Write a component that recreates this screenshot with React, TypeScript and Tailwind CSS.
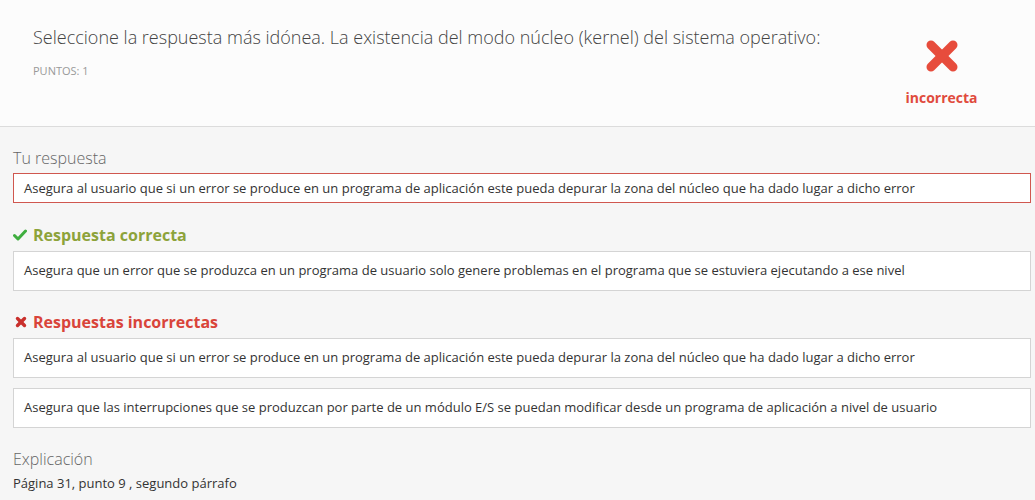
import React from 'react';

const font = { fontFamily: '"Open Sans", "Noto Sans", sans-serif' };

const BigCross: React.FC = () => (
  <svg width="34" height="34" viewBox="0 0 34 34">
    <g stroke="#e74c3c" strokeWidth="9" strokeLinecap="round">
      <line x1="6" y1="6" x2="28" y2="28" />
      <line x1="28" y1="6" x2="6" y2="28" />
    </g>
  </svg>
);

const SmallCheck: React.FC = () => (
  <svg width="14" height="12" viewBox="0 0 14 12">
    <path d="M1.5 6.5 L5 10 L12.5 2" fill="none" stroke="#3fae3f" strokeWidth="3" strokeLinecap="round" strokeLinejoin="round" />
  </svg>
);

const SmallCross: React.FC = () => (
  <svg width="12" height="12" viewBox="0 0 12 12">
    <g stroke="#c9302c" strokeWidth="3.4" strokeLinecap="round">
      <line x1="2.5" y1="2.5" x2="9.5" y2="9.5" />
      <line x1="9.5" y1="2.5" x2="2.5" y2="9.5" />
    </g>
  </svg>
);

const AnswerBox: React.FC<{ text: string; wrong?: boolean }> = ({ text, wrong }) => (
  <div
    className={`bg-white border ${wrong ? 'border-[#d0574f] h-[30px] pt-[2px]' : 'border-[#d4d4d4] h-[40px]'} flex items-center px-[10px] text-[13px] text-[#333]`}
  >
    {text}
  </div>
);

const App: React.FC = () => {
  return (
    <div className="w-[1035px] h-[500px] bg-[#f6f6f6] overflow-hidden" style={font}>
      {/* Header */}
      <div className="h-[127px] bg-[#fcfcfc] border-b border-[#dcdcdc] flex">
        <div className="flex-1 pl-[33px] pt-[24px]">
          <h1 className="text-[18px] font-light text-[#444] leading-[26px]">
            Seleccione la respuesta más idónea. La existencia del modo núcleo (kernel) del sistema operativo:
          </h1>
          <p className="text-[11px] text-[#999] mt-[13px] uppercase">Puntos: 1</p>
        </div>
        <div className="w-[145px] flex flex-col items-center pt-[39px] pr-[42px]">
          <BigCross />
          <span className="text-[14px] font-bold text-[#e04b3d] mt-[14px]">incorrecta</span>
        </div>
      </div>

      {/* Body */}
      <div className="pl-[13px] pr-[4px] pt-[20px]">
        <h2 className="text-[16px] font-light text-[#666] leading-[22px]">Tu respuesta</h2>
        <div className="mt-[4px]">
          <AnswerBox wrong text="Asegura al usuario que si un error se produce en un programa de aplicación este pueda depurar la zona del núcleo que ha dado lugar a dicho error" />
        </div>

        <div className="flex items-center gap-[6px] mt-[20px] h-[24px]">
          <SmallCheck />
          <h3 className="text-[16px] font-bold text-[#8da33a]">Respuesta correcta</h3>
        </div>
        <div className="mt-[4px]">
          <AnswerBox text="Asegura que un error que se produzca en un programa de usuario solo genere problemas en el programa que se estuviera ejecutando a ese nivel" />
        </div>

        <div className="flex items-center gap-[6px] mt-[19px] h-[24px] pl-[2px]">
          <SmallCross />
          <h3 className="text-[16px] font-bold text-[#d9443a]">Respuestas incorrectas</h3>
        </div>
        <div className="mt-[4px] flex flex-col gap-[10px]">
          <AnswerBox text="Asegura al usuario que si un error se produce en un programa de aplicación este pueda depurar la zona del núcleo que ha dado lugar a dicho error" />
          <AnswerBox text="Asegura que las interrupciones que se produzcan por parte de un módulo E/S se puedan modificar desde un programa de aplicación a nivel de usuario" />
        </div>

        <h2 className="text-[16px] font-light text-[#666] leading-[22px] mt-[20px]">Explicación</h2>
        <p className="text-[13px] text-[#333] mt-[4px]">Página 31, punto 9 , segundo párrafo</p>
      </div>
    </div>
  );
};

export default App;
